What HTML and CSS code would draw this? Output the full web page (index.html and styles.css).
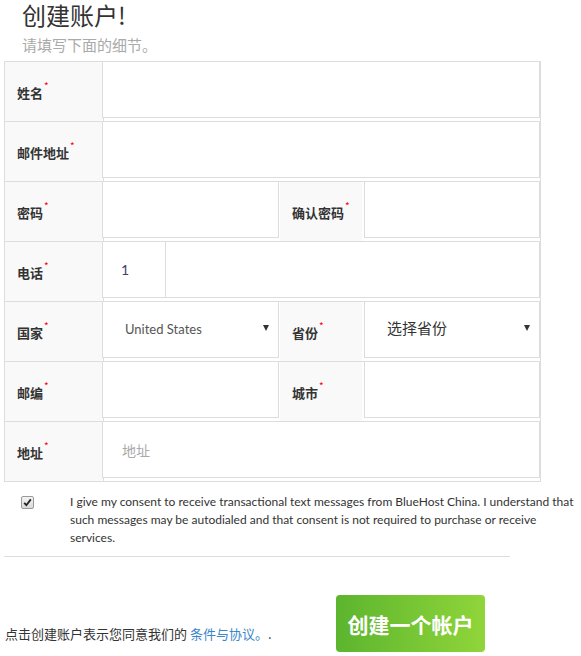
FILE: index.html
```html
<!DOCTYPE html>
<html lang="zh-CN">
<head>
    <meta charset="UTF-8">
    <meta name="viewport" content="width=device-width, initial-scale=1.0">
    <title>创建账户</title>
    <link rel="stylesheet" href="styles.css">
</head>
<body>
    <header class="page-head">
        <h1>创建账户!</h1>
        <p class="sub">请填写下面的细节。</p>
    </header>

    <main>
        <div class="signup">
            <div class="row">
                <div class="label">姓名<sup>*</sup></div>
                <div class="field">
                    <input type="text" class="input">
                    <div class="hint"></div>
                </div>
            </div>
            <div class="row">
                <div class="label">邮件地址<sup>*</sup></div>
                <div class="field">
                    <input type="email" class="input">
                    <div class="hint"></div>
                </div>
            </div>
            <div class="row">
                <div class="label">密码<sup>*</sup></div>
                <div class="field half">
                    <input type="password" class="input">
                    <div class="hint"></div>
                </div>
                <div class="label label-mid">确认密码<sup>*</sup></div>
                <div class="field">
                    <input type="password" class="input">
                </div>
            </div>
            <div class="row">
                <div class="label">电话<sup>*</sup></div>
                <div class="field">
                    <div class="phone">
                        <input type="text" class="input code" value="1">
                        <input type="tel" class="input number">
                    </div>
                    <div class="hint"></div>
                </div>
            </div>
            <div class="row">
                <div class="label">国家<sup>*</sup></div>
                <div class="field half">
                    <div class="input select country">
                        <span>United States</span>
                        <i class="caret"></i>
                    </div>
                    <div class="hint"></div>
                </div>
                <div class="label label-mid">省份<sup>*</sup></div>
                <div class="field">
                    <div class="input select province">
                        <span>选择省份</span>
                        <i class="caret"></i>
                    </div>
                </div>
            </div>
            <div class="row">
                <div class="label">邮编<sup>*</sup></div>
                <div class="field half">
                    <input type="text" class="input">
                    <div class="hint"></div>
                </div>
                <div class="label label-mid">城市<sup>*</sup></div>
                <div class="field">
                    <input type="text" class="input">
                </div>
            </div>
            <div class="row">
                <div class="label">地址<sup>*</sup></div>
                <div class="field">
                    <input type="text" class="input" placeholder="地址">
                    <div class="hint"></div>
                </div>
            </div>
        </div>

        <div class="consent">
            <div class="check-col">
                <span class="checkbox" role="checkbox" aria-checked="true">
                    <svg width="9" height="9" viewBox="0 0 9 9">
                        <path d="M1.2 4.8 L3.4 7.2 L7.8 1.4" fill="none" stroke="#222" stroke-width="1.8"/>
                    </svg>
                </span>
            </div>
            <p class="consent-text">I give my consent to receive transactional text messages from BlueHost China. I understand that such messages may be autodialed and that consent is not required to purchase or receive services.</p>
        </div>

        <hr class="divider">

        <div class="submit-bar">
            <p class="terms">点击创建账户表示您同意我们的 <a href="#">条件与协议。</a>.</p>
            <button class="btn-create">创建一个帐户</button>
        </div>
    </main>
</body>
</html>
```

FILE: styles.css
```css
* {
    margin: 0;
    padding: 0;
    box-sizing: border-box;
}

body {
    font-family: "Noto Sans CJK SC", "Noto Sans", sans-serif;
    color: #333;
    background: #fff;
    width: 581px;
}

.page-head {
    padding: 3px 22px 0;
}

.page-head h1 {
    font-size: 24px;
    font-weight: normal;
    line-height: 24px;
    color: #333;
}

.page-head .sub {
    font-size: 15px;
    line-height: 20px;
    margin-top: 8px;
    color: #aaa;
}

/* form grid */
.signup {
    margin: 6px 0 0 4px;
    width: 537px;
    border-left: 1px solid #ddd;
    border-right: 1px solid #ddd;
    border-bottom: 1px solid #ddd;
}

.row {
    display: flex;
    height: 60px;
    border-top: 1px solid #ddd;
}

.label {
    width: 97px;
    flex-shrink: 0;
    background-color: #f9f9f9;
    display: flex;
    align-items: center;
    padding: 1px 0 0 12px;
    font-size: 13px;
    font-weight: bold;
    color: #333;
}

.label sup {
    color: #f00;
    font-size: 10px;
    font-weight: normal;
    align-self: flex-start;
    margin-top: 15px;
    margin-left: 1px;
}

.label-mid {
    width: 82px;
    margin: 0 2px 0 1px;
}

.field {
    flex: 1;
    margin-top: -1px;
    display: flex;
    flex-direction: column;
}

.field.half {
    flex: 0 0 177px;
}

.input {
    width: 100%;
    height: 57px;
    border: 1px solid #ddd;
    border-radius: 0;
    background: #fff;
    padding: 0 19px;
    font-family: "Noto Sans CJK SC", sans-serif;
    font-size: 14px;
    color: #444;
    outline: none;
}

.input::placeholder {
    color: #aaa;
}

.hint {
    height: 3px;
    margin-left: 1px;
    border-left: 1px solid #ddd;
}

.phone {
    display: flex;
}

.phone .code {
    width: 64px;
    flex-shrink: 0;
    padding-left: 18px;
    font-family: Lato, sans-serif;
    font-size: 14px;
    color: #4a3d6b;
}

.phone .number {
    flex: 1;
    border-left: none;
}

.select {
    display: flex;
    align-items: center;
    justify-content: space-between;
    padding: 0 9px 0 22px;
}

.country span {
    font-family: Lato, sans-serif;
    font-size: 13px;
    color: #555;
    padding-bottom: 2px;
}

.province span {
    font-size: 15px;
    color: #333;
    padding-bottom: 4px;
}

.caret {
    width: 0;
    height: 0;
    border-left: 3px solid transparent;
    border-right: 3px solid transparent;
    border-top: 6px solid #333;
    margin-bottom: 3px;
}

/* sms consent */
.consent {
    display: flex;
    margin-top: 11px;
    padding-right: 2px;
}

.check-col {
    width: 70px;
    flex-shrink: 0;
    padding: 3px 0 0 21px;
}

.checkbox {
    display: flex;
    align-items: center;
    justify-content: center;
    width: 13px;
    height: 13px;
    border: 1px solid #9a9a9a;
    border-radius: 2px;
    background: linear-gradient(#f4f4f4, #d8d8d8);
}

.consent-text {
    font-family: Lato, sans-serif;
    font-size: 12px;
    line-height: 18px;
    color: #333;
}

.divider {
    margin: 9px 0 0 4px;
    width: 506px;
    border: none;
    border-top: 1px solid #ddd;
}

/* footer row */
.submit-bar {
    display: flex;
    align-items: center;
    margin-top: 38px;
    padding-left: 5px;
}

.terms {
    width: 331px;
    font-size: 13px;
    color: #333;
    padding-top: 20px;
}

.terms a {
    color: #3a86c8;
    text-decoration: none;
}

.btn-create {
    width: 149px;
    height: 57px;
    border: none;
    border-radius: 4px;
    background: linear-gradient(to right, #5cb52e, #90d53a);
    color: #fff;
    font-family: "Noto Sans CJK SC", sans-serif;
    font-size: 21px;
    font-weight: bold;
    cursor: pointer;
}
```
